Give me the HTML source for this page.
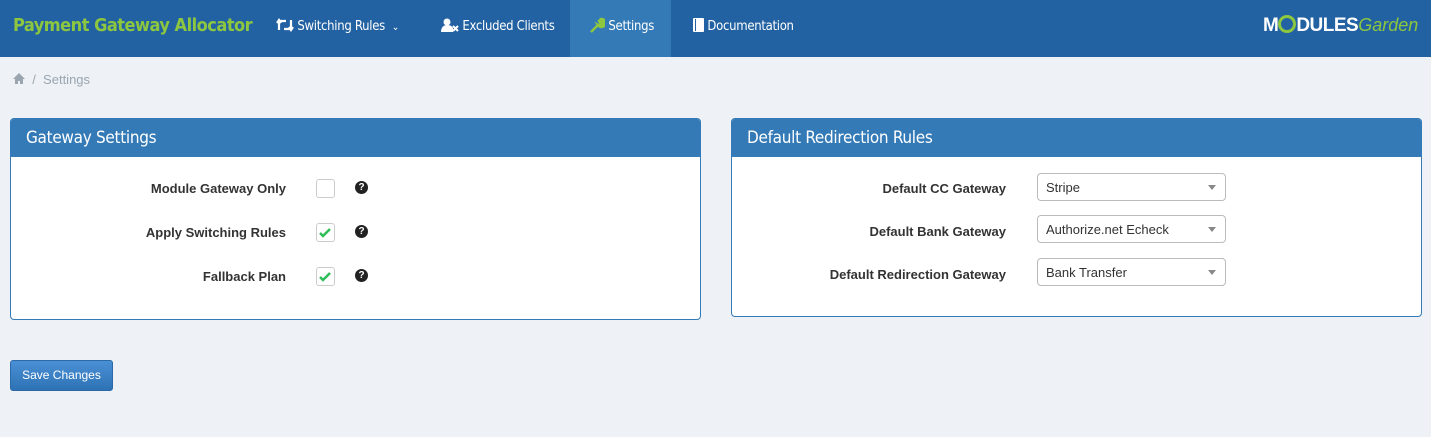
<!DOCTYPE html>
<html><head><style>
*{box-sizing:border-box;margin:0;padding:0}
body{width:1431px;height:437px;background:#eef2f6;font-family:"Liberation Sans",sans-serif;position:relative;overflow:hidden}
.nav{position:absolute;left:0;top:0;width:1431px;height:57px;background:#2262a2}
.brand{position:absolute;left:13px;top:15px;font-size:18px;font-weight:bold;color:#8dc63f;font-family:"DejaVu Sans Condensed","DejaVu Sans",sans-serif;letter-spacing:-0.5px}
.ni{position:absolute;top:0;height:57px;line-height:54px;color:#fff;font-size:13px;font-family:"DejaVu Sans Condensed","DejaVu Sans",sans-serif;letter-spacing:-0.3px}
.act{background:#337ab7}
.bc{position:absolute;left:13px;top:72px;font-size:13px;color:#9aa5b0}
.panel{position:absolute;top:118px;background:#fff;border:1px solid #337ab7;border-radius:4px;overflow:hidden}
.ph{height:38px;background:#337ab7;color:#fff;font-size:17px;padding:9px 15px;font-family:"DejaVu Sans Condensed","DejaVu Sans",sans-serif;font-weight:300;letter-spacing:-0.3px}
.lbl{position:absolute;font-weight:bold;font-size:13px;color:#333;text-align:right}
.cb{position:absolute;width:19px;height:19px;border:1px solid #ccc;border-radius:3px;background:#fff}
.q{position:absolute;width:13px;height:13px;border-radius:50%;background:#222;color:#fff;font-size:10px;font-weight:bold;text-align:center;line-height:13px}
.sel{position:absolute;left:305px;width:189px;height:28px;border:1px solid #bbb;border-radius:4px;font-size:13px;color:#333;padding:6px 8px}
.sel:after{content:"";position:absolute;right:9px;top:11px;border-left:4px solid transparent;border-right:4px solid transparent;border-top:5px solid #888}
.btn{position:absolute;left:10px;top:360px;width:103px;height:31px;border:1px solid #2b6aa6;border-radius:3px;background:linear-gradient(#4a90d4,#2e72b5);color:#fff;font-size:12px;text-align:center;line-height:29px}
</style></head><body>
<div class="nav">
<div class="brand">Payment Gateway Allocator</div>
<div class="ni" style="left:276px">
<svg width="18" height="14" viewBox="0 0 18 14" style="vertical-align:-2px"><path d="M3 12V3h7M1 5l2-3 2 3M15 2v9H8M13 9l2 3 2-3" stroke="#fff" stroke-width="2.2" fill="none"/></svg> Switching Rules &nbsp;<span style="font-size:10px">&#8964;</span></div>
<div class="ni" style="left:441px"><svg width="18" height="14" viewBox="0 0 18 14" style="vertical-align:-2px"><circle cx="6" cy="4" r="3.5" fill="#fff"/><path d="M0 14c0-5 3-7 6-7s5 1 6 3v4z" fill="#fff"/><path d="M12 8l5 5M17 8l-5 5" stroke="#fff" stroke-width="2"/></svg> Excluded Clients</div>
<div class="ni act" style="left:570px;width:101px;padding-left:19px"><svg width="16" height="16" viewBox="0 0 16 16" style="vertical-align:-3px"><path d="M2 15L9 8M9 8a4 4 0 1 0 3-6l-2 2 1 2 2 1 2-2a4 4 0 0 1-6 3z" stroke="#8dc63f" stroke-width="2.5" fill="#8dc63f"/></svg> Settings</div>
<div class="ni" style="left:692px"><svg width="12" height="14" viewBox="0 0 12 14" style="vertical-align:-2px"><rect x="1" y="0" width="11" height="14" rx="1" fill="#fff"/><rect x="3" y="1" width="1" height="12" fill="#2262a2"/></svg> Documentation</div>
<div style="position:absolute;left:1263px;top:15px;font-size:19px;font-weight:bold;color:#fff;letter-spacing:-0.5px">M<span style="display:inline-block;width:18px;height:18px;border:3px solid #8dc63f;border-radius:50%;vertical-align:-2px"></span>DULES<span style="color:#8dc63f;font-weight:normal;font-style:italic;font-size:18px;letter-spacing:0">Garden</span></div>
</div>
<div class="bc"><svg width="12" height="11" viewBox="0 0 12 11"><path d="M6 0L0 6h2v5h3V8h2v3h3V6h2z" fill="#9aa5b0"/></svg> &nbsp;/&nbsp; Settings</div>

<div class="panel" style="left:10px;width:691px;height:202px">
<div class="ph">Gateway Settings</div>
<div class="lbl" style="right:414px;top:62px">Module Gateway Only</div>
<div class="lbl" style="right:414px;top:106px">Apply Switching Rules</div>
<div class="lbl" style="right:414px;top:150px">Fallback Plan</div>
<div class="cb" style="left:305px;top:60px"></div>
<div class="cb" style="left:305px;top:104px"><svg width="17" height="17" viewBox="0 0 17 17"><path d="M3 9l3 3 7-7" stroke="#2ebd59" stroke-width="2.5" fill="none"/></svg></div>
<div class="cb" style="left:305px;top:148px"><svg width="17" height="17" viewBox="0 0 17 17"><path d="M3 9l3 3 7-7" stroke="#2ebd59" stroke-width="2.5" fill="none"/></svg></div>
<div class="q" style="left:344px;top:62px">?</div>
<div class="q" style="left:344px;top:106px">?</div>
<div class="q" style="left:344px;top:150px">?</div>
</div>

<div class="panel" style="left:731px;width:691px;height:199px">
<div class="ph">Default Redirection Rules</div>
<div class="lbl" style="right:415px;top:62px">Default CC Gateway</div>
<div class="lbl" style="right:415px;top:105px">Default Bank Gateway</div>
<div class="lbl" style="right:415px;top:148px">Default Redirection Gateway</div>
<div class="sel" style="top:54px">Stripe</div>
<div class="sel" style="top:96px">Authorize.net Echeck</div>
<div class="sel" style="top:139px">Bank Transfer</div>
</div>

<div class="btn">Save Changes</div>
</body></html>
